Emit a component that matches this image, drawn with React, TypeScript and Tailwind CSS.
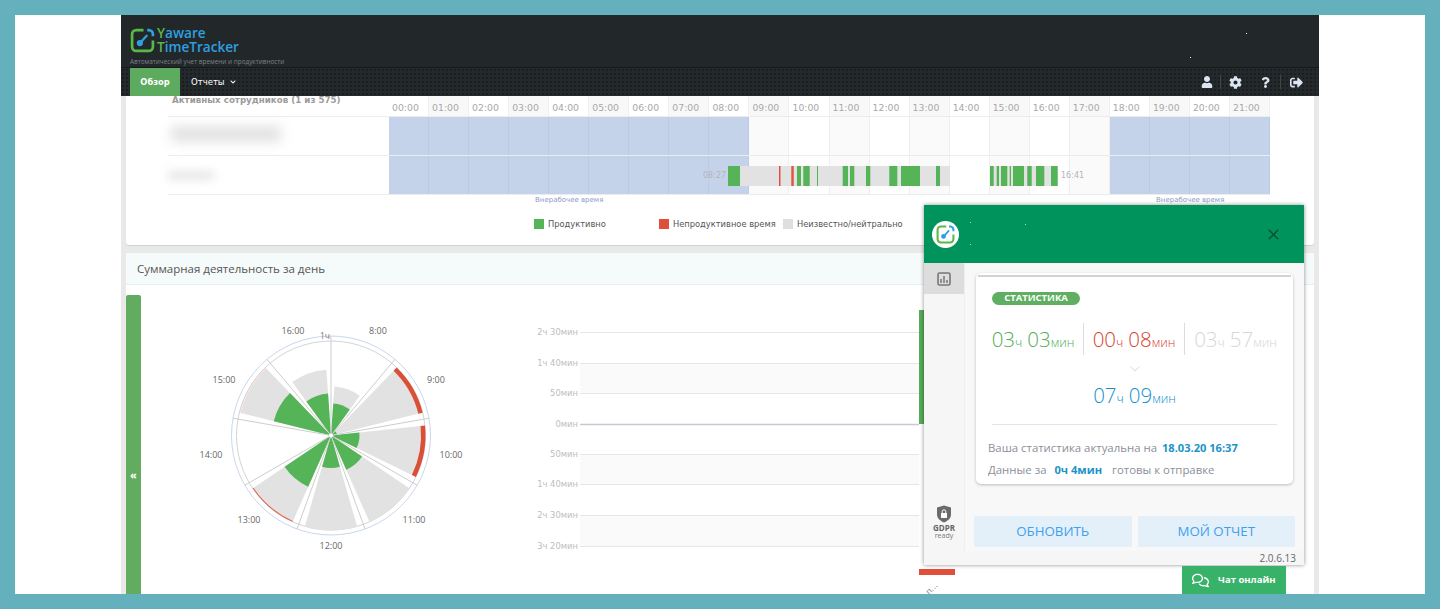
import React from "react";
import { FaUser, FaCog, FaQuestion, FaSignOutAlt, FaChevronDown } from "react-icons/fa";
import { FaRegComments } from "react-icons/fa6";
import { X, ChevronDown } from "lucide-react";

const hours = Array.from({ length: 22 }, (_, i) => i);
const pad = (n: number) => String(n).padStart(2, "0") + ":00";

function Logo({ size }: { size: number }) {
  return (
    <svg width={size} height={size} viewBox="0 0 24 24" fill="none">
      <path d="M13 2H6a4 4 0 0 0-4 4v12a4 4 0 0 0 4 4h12a4 4 0 0 0 4-4v-6" stroke="#58b947" strokeWidth="2.6" />
      <path d="M16.5 2H18a4 4 0 0 1 4 4v2" stroke="#2e9fe0" strokeWidth="2.6" />
      <circle cx="9.5" cy="14.5" r="3" fill="#2e9fe0" />
      <path d="M10 14 L16 7.5" stroke="#2e9fe0" strokeWidth="2.2" strokeLinecap="round" />
    </svg>
  );
}

function Timeline() {
  const greens = [
    [728, 740], [797, 801], [803.3, 809.7], [817, 818], [842.7, 848], [850, 854.3], [866, 870.3], [889.3, 897.3],
    [901, 920], [936, 940], [990, 993.7], [996.7, 999], [1001, 1007.3], [1009.7, 1011], [1013, 1024],
    [1027.3, 1031.7], [1036, 1044.3], [1051, 1057.7],
  ];
  const reds = [[779, 780.5], [791.3, 793.7]];
  return (
    <svg className="absolute left-[560px] top-[10px]" width="340" height="20" viewBox="728 0 340 20">
      <rect x="728" y="0" width="222" height="20" fill="#e2e2e2" />
      <rect x="990" y="0" width="67.7" height="20" fill="#e2e2e2" />
      {greens.map(([a, b]) => (
        <rect key={a} x={a} y="0" width={b - a} height="20" fill="#56b458" />
      ))}
      {reds.map(([a, b]) => (
        <rect key={a} x={a} y="0" width={b - a} height="20" fill="#e0533d" />
      ))}
    </svg>
  );
}

function HourTable() {
  return (
    <div className="ml-[42px] w-[1102px] flex flex-col font-['DejaVu_Sans',sans-serif]">
      <div className="flex h-[21px] border-b border-[#ececec]">
        <div className="w-[221px] shrink-0 pl-[4px] text-[8.7px] font-bold leading-[9px] text-[#9a9a9a]">Активных сотрудников (1 из 575)</div>
        {hours.map((h) => (
          <div key={h} className={`flex-1 pl-[3px] text-left text-[9.3px] leading-[24px] text-[#a8a8a8] border-r border-[#f0f0f0] ${h % 2 ? "bg-[#f8f8f8]" : "bg-white"}`}>
            {pad(h)}
          </div>
        ))}
      </div>
      {[0, 1].map((r) => (
        <div key={r} className="relative flex h-[39px] border-b border-[#ececec]">
          <div className="w-[221px] shrink-0 relative">
            {r === 0 ? (
              <div className="mt-[9px] ml-[3px] h-[16px] w-[110px] bg-[#e2e2e2] blur-[6px]" />
            ) : (
              <div className="mt-[15px] h-[9px] w-[46px] bg-[#e6e6e6] blur-[5px]" />
            )}
          </div>
          {hours.map((h) => {
            const off = h < 9 || h > 17;
            return (
              <div
                key={h}
                className={`flex-1 border-r ${off ? "bg-[#c5d3ea] border-[#bccbe3]" : h % 2 ? "bg-[#fafafa] border-[#efefef]" : "bg-white border-[#efefef]"}`}
              />
            );
          })}
          {r === 1 && (
            <>
              <span className="absolute left-[535px] top-[14px] text-[8px] leading-[11px] text-[#b4b4b4]">08:27</span>
              <Timeline />
              <span className="absolute left-[893px] top-[14px] text-[8px] leading-[11px] text-[#b4b4b4]">16:41</span>
            </>
          )}
        </div>
      ))}
    </div>
  );
}

function Legend({ color, label, w }: { color: string; label: string; w: string }) {
  return (
    <div className={`flex items-center gap-[4px] ${w}`}>
      <span className={`h-[10px] w-[10px] ${color}`} />
      <span className="text-[8.3px] text-[#555] whitespace-nowrap">{label}</span>
    </div>
  );
}

const C = { x: 141, y: 115.5 };
const pt = (r: number, a: number) => {
  const t = (a * Math.PI) / 180;
  return [C.x + r * Math.sin(t), C.y - r * Math.cos(t)];
};
const wedge = (r: number, a: number, b: number) => {
  const [x1, y1] = pt(r, a);
  const [x2, y2] = pt(r, b);
  return `M${C.x} ${C.y}L${x1} ${y1}A${r} ${r} 0 0 1 ${x2} ${y2}Z`;
};
const ring = (r0: number, r1: number, a: number, b: number) => {
  const [x1, y1] = pt(r1, a);
  const [x2, y2] = pt(r1, b);
  const [x3, y3] = pt(r0, b);
  const [x4, y4] = pt(r0, a);
  return `M${x1} ${y1}A${r1} ${r1} 0 0 1 ${x2} ${y2}L${x3} ${y3}A${r0} ${r0} 0 0 0 ${x4} ${y4}Z`;
};

function PolarChart() {
  const sectors = [
    { a: 0, gray: 49, green: 32 },
    { a: 40, gray: 90.5, green: 6 },
    { a: 80, gray: 90, green: 28.5 },
    { a: 120, gray: 94.5, green: 37.5 },
    { a: 160, gray: 95, green: 32.5 },
    { a: 200, gray: 93.5, green: 56 },
    { a: 280, gray: 93.5, green: 59 },
    { a: 320, gray: 66, green: 42 },
  ];
  const labels = [
    ["16:00", 103, 14], ["8:00", 188, 14], ["9:00", 246, 63], ["10:00", 261, 137.5], ["11:00", 224, 203],
    ["12:00", 141, 229], ["13:00", 59, 203], ["14:00", 21, 137.5], ["15:00", 34, 63],
  ] as [string, number, number][];
  return (
    <svg width="280" height="235" className="shrink-0">
      <circle cx={C.x} cy={C.y} r="99.5" fill="white" stroke="#c9d7ec" strokeWidth="1" />
      <circle cx={C.x} cy={C.y} r="94.5" fill="white" stroke="#d4d4d4" strokeWidth="1" />
      {sectors.map((s) => (
        <path key={s.a} d={wedge(s.gray, s.a + 4, s.a + 36)} fill="#e2e2e2" />
      ))}
      {sectors.map((s) => (
        <path key={s.a} d={wedge(s.green, s.a + 4, s.a + 36)} fill="#56b458" />
      ))}
      {[0, 40, 80, 120, 160, 200, 240, 280, 320].map((a) => {
        const [x, y] = pt(99.5, a);
        return <line key={a} x1={C.x} y1={C.y} x2={x} y2={y} stroke="#cdcdcd" strokeWidth="1" />;
      })}
      <path d={ring(90, 94.5, 44, 76)} fill="#db4f36" />
      <path d={ring(90, 94.5, 84, 116)} fill="#db4f36" />
      <path d={ring(93.5, 94.5, 204, 236)} fill="#e0624d" />
      <path d={ring(94, 94.5, 284, 316)} fill="#f4c6bb" />
      <circle cx={C.x} cy={C.y} r="2" fill="white" />
      <text x="135" y="19" textAnchor="middle" fontSize="8.5" fill="#777" fontFamily="'Open Sans',sans-serif">1ч</text>
      {labels.map(([t, x, y]) => (
        <text key={t} x={x} y={y} textAnchor="middle" fontSize="9" fill="#666" fontFamily="'Open Sans',sans-serif">{t}</text>
      ))}
    </svg>
  );
}

function BarChart() {
  const rows = [
    ["2ч 30мин", 332], ["1ч 40мин", 363], ["50мин", 393], ["0мин", 424],
    ["50мин", 454], ["1ч 40мин", 484], ["2ч 30мин", 515], ["3ч 20мин", 546],
  ] as [string, number][];
  return (
    <svg width="440" height="294" className="shrink-0" viewBox="520 300 440 294">
      <rect x="580" y="363" width="339" height="30" fill="#fafafa" />
      <rect x="580" y="454" width="339" height="30" fill="#fafafa" />
      <rect x="580" y="515" width="339" height="31" fill="#fafafa" />
      {rows.map(([t, y], i) => (
        <g key={i}>
          <line x1="580" x2="919" y1={y + 0.5} y2={y + 0.5} stroke={t === "0мин" ? "#c6cad3" : "#e6e6e6"} strokeWidth={t === "0мин" ? 1.5 : 1} />
          <text x="578" y={y + 3} textAnchor="end" fontSize="8.4" fill="#bdbdbd" fontFamily="'DejaVu Sans',sans-serif">{t}</text>
        </g>
      ))}
      <rect x="919" y="310" width="40" height="114" fill="#56ac58" />
      <rect x="919" y="569" width="36" height="6" fill="#df4f39" />
      <text transform="rotate(-45 938 586)" x="938" y="586" textAnchor="end" fontSize="8" fill="#888" fontFamily="'DejaVu Sans',sans-serif">п...</text>
    </svg>
  );
}

function Stat({ h, m, color }: { h: string; m: string; color: string }) {
  return (
    <div className={`flex items-baseline justify-center whitespace-nowrap font-light ${color}`}>
      <span className="text-[20.5px] leading-[26px]">{h}</span>
      <span className="text-[12.5px] mr-[5px]">ч</span>
      <span className="text-[20.5px] leading-[26px]">{m}</span>
      <span className="text-[12.5px]">мин</span>
    </div>
  );
}

function Popup() {
  return (
    <div className="absolute left-[803px] top-[190px] flex h-[360px] w-[380px] flex-col bg-[#f8f8f8] shadow-[0_0_4px_rgba(0,0,0,0.45)] font-['Open_Sans',sans-serif]">
      <div className="relative flex h-[58px] shrink-0 items-center justify-between bg-[#00945c] pl-[8px] pr-[22px]">
        <div className="flex h-[27px] w-[27px] items-center justify-center rounded-full bg-white">
          <Logo size={19} />
        </div>
        <X size={17} strokeWidth={2} className="text-[#0e4d36]" />
        <span className="absolute left-[46px] top-[17px] h-px w-px bg-[#a9dcc6]" />
        <span className="absolute left-[101px] top-[19px] h-px w-px bg-[#a9dcc6]" />
        <span className="absolute left-[46px] top-[39px] h-px w-px bg-[#a9dcc6]" />
      </div>
      <div className="flex flex-1 min-h-0">
        <div className="flex w-[41px] shrink-0 flex-col justify-between border-r border-[#efefef] bg-[#f6f6f6] pb-[12px]">
          <div className="flex h-[31px] items-center justify-center bg-[#dddddd]">
            <svg width="14" height="14" viewBox="0 0 14 14" fill="none">
              <rect x="1" y="1" width="12" height="12" rx="1.5" stroke="#777" strokeWidth="1.6" />
              <path d="M4 11V7M7 11V4M10 11V8" stroke="#777" strokeWidth="1.5" />
            </svg>
          </div>
          <div className="flex flex-col items-center">
            <svg width="16" height="18" viewBox="0 0 16 18">
              <path d="M8 0.5 15 2.5V9.5C15 13.5 11.5 16 8 17.5 4.5 16 1 13.5 1 9.5V2.5Z" fill="#6a6a6a" />
              <rect x="5" y="8" width="6" height="5" rx="0.6" fill="#fff" />
              <path d="M6.2 8V6.6a1.8 1.8 0 0 1 3.6 0V8" stroke="#fff" strokeWidth="1" fill="none" />
            </svg>
            <span className="mt-[1px] text-[8px] font-bold leading-[8px] text-[#666]">GDPR</span>
            <span className="text-[7px] leading-[7px] text-[#777]">ready</span>
          </div>
        </div>
        <div className="flex flex-1 flex-col px-[9px] pt-[10px]">
          <div className="mx-[2px] flex h-[211px] flex-col rounded-[5px] bg-white px-[2px] pt-[2px] shadow-[0_1px_3px_rgba(0,0,0,0.25)]">
            <div className="h-[2px] bg-[#d2d2d2]" />
            <div className="mt-[15px] ml-[14px] flex h-[13px] w-[88px] items-center justify-center rounded-full bg-[#5fae62] text-[9.5px] font-bold text-white">
              СТАТИСТИКА
            </div>
            <div className="mt-[18px] ml-[5px] flex w-[303px]">
              <div className="flex h-[32px] w-[101px] items-center justify-center border-r border-[#dcdcdc]">
                <Stat h="03" m="03" color="text-[#4fae52]" />
              </div>
              <div className="flex h-[32px] w-[101px] items-center justify-center border-r border-[#dcdcdc]">
                <Stat h="00" m="08" color="text-[#d9432f]" />
              </div>
              <div className="flex h-[32px] w-[101px] items-center justify-center">
                <Stat h="03" m="57" color="text-[#d6d6d6]" />
              </div>
            </div>
            <div className="mt-[6px] flex h-[13px] justify-center">
              <ChevronDown size={16} strokeWidth={1} className="text-[#c4c4c4]" />
            </div>
            <div className="mt-[8px]">
              <Stat h="07" m="09" color="text-[#1391cc]" />
            </div>
            <div className="mx-[14px] mt-[15px] h-px bg-[#e4e4e4]" />
            <div className="mt-[14px] ml-[10px] flex items-center gap-[5px] text-[11.4px] leading-[18px] text-[#8b8f9a]">
              <span>Ваша статистика актуальна на</span>
              <span className="text-[11.1px] font-bold text-[#1b93c9]">18.03.20 16:37</span>
            </div>
            <div className="mt-[4px] ml-[10px] flex items-center text-[11.4px] leading-[18px] text-[#8b8f9a]">
              <span>Данные за</span>
              <span className="ml-[8px] mr-[10px] text-[11.1px] font-bold text-[#1b93c9]">0ч 4мин</span>
              <span>готовы к отправке</span>
            </div>
          </div>
          <div className="mt-[32px] flex gap-[6px]">
            <div className="flex h-[31px] flex-1 items-center justify-center rounded-[2px] bg-[#e3eff9] text-[13.3px] text-[#3f9ff0]">ОБНОВИТЬ</div>
            <div className="flex h-[31px] flex-1 items-center justify-center rounded-[2px] bg-[#e3eff9] text-[13.3px] text-[#3f9ff0]">МОЙ ОТЧЕТ</div>
          </div>
        </div>
      </div>
      <div className="flex h-[14px] shrink-0 items-center justify-end bg-[#f6f6f6] pr-[8px] text-[10px] text-[#666]">2.0.6.13</div>
    </div>
  );
}

export default function App() {
  return (
    <div className="h-[609px] w-[1440px] overflow-hidden bg-[#64b1bd] p-[15px]">
      <div className="h-full w-full bg-white">
        <div className="relative mx-auto flex h-full w-[1198px] flex-col overflow-hidden bg-[#e9e9e9] font-['Open_Sans',sans-serif]">
          <header className="relative flex h-[52px] shrink-0 flex-col justify-between bg-[#22282a] pl-[9px]">
            <div className="mt-[11px] flex items-center gap-[2px]">
              <Logo size={25} />
              <div className="flex flex-col text-[13.6px] font-semibold leading-[14px] text-[#2e9fe0]">
                <span><span className="text-[#58b947]">Y</span>aware</span>
                <span><span className="text-[#58b947]">T</span>imeTracker</span>
              </div>
            </div>
            <div className="mb-[1px] text-[6.4px] leading-[9px] text-[#7b8184]">Автоматический учет времени и продуктивности</div>
            <span className="absolute left-[1125px] top-[18px] h-px w-px bg-white" />
            <span className="absolute left-[1069px] top-[42px] h-px w-px bg-white" />
          </header>
          <nav className="relative z-10 flex h-[29px] shrink-0 items-stretch border-t border-[#15191a] bg-[#24292b] bg-[radial-gradient(#1b1e1f_1px,transparent_1px)] bg-[length:4px_4px] pl-[9px] pr-[16px] font-['DejaVu_Sans',sans-serif]">
            <div className="flex w-[50px] items-center justify-center bg-[#5dab5f] text-[8.3px] font-bold text-white">Обзор</div>
            <div className="ml-[11px] flex items-center gap-[5px] text-[8.5px] text-white">
              Отчеты <FaChevronDown size={6} />
            </div>
            <div className="ml-auto flex items-center text-[#dbe6f2]">
              <FaUser size={12} />
              <span className="mx-[7px] h-[14px] w-px bg-[#444]" />
              <FaCog size={13} className="ml-[1px]" />
              <FaQuestion size={11} className="ml-[18px]" />
              <span className="mx-[9px] h-[14px] w-px bg-[#444]" />
              <FaSignOutAlt size={13} />
            </div>
          </nav>
          <main className="flex min-h-0 flex-1 flex-col gap-[8px] px-[5px]">
            <section className="flex h-[149px] shrink-0 flex-col rounded-b-[3px] bg-white font-['DejaVu_Sans',sans-serif] shadow-[0_1px_1px_rgba(0,0,0,0.1)]">
              <HourTable />
              <div className="ml-[409px] flex text-[7px] leading-[10px] text-[#8d9bc8]">
                <span className="w-[621px]">Внерабочее время</span>
                <span>Внерабочее время</span>
              </div>
              <div className="ml-[408px] mt-[13px] flex items-center">
                <Legend color="bg-[#56b458]" label="Продуктивно" w="w-[125px]" />
                <Legend color="bg-[#df4f39]" label="Непродуктивное время" w="w-[124px]" />
                <Legend color="bg-[#dfdfdf]" label="Неизвестно/нейтрально" w="w-[125px]" />
              </div>
            </section>
            <section className="flex min-h-0 flex-1 flex-col bg-white">
              <div className="flex h-[32px] shrink-0 items-center border-b border-[#e6eff0] bg-[#f5fafa] pl-[11px] text-[11.5px] text-[#555]">
                Суммарная деятельность за день
              </div>
              <div className="flex min-h-0 flex-1 items-start">
                <div className="mt-[10px] flex h-[320px] w-[15px] shrink-0 items-center justify-center rounded-t-[2px] bg-[#62ac5f] pt-[40px] text-[11px] font-bold text-white">«</div>
                <div className="ml-[49px] mt-[35px]"><PolarChart /></div>
                <div className="ml-[50px] mt-[15px]"><BarChart /></div>
              </div>
            </section>
          </main>
          <Popup />
          <div className="absolute bottom-0 left-[1061px] flex h-[28px] w-[104px] items-center gap-[9px] bg-[#39b269] pl-[10px] text-[9.5px] font-bold text-white">
            <FaRegComments size={17} />
            <span className="whitespace-nowrap">Чат онлайн</span>
          </div>
        </div>
      </div>
    </div>
  );
}
